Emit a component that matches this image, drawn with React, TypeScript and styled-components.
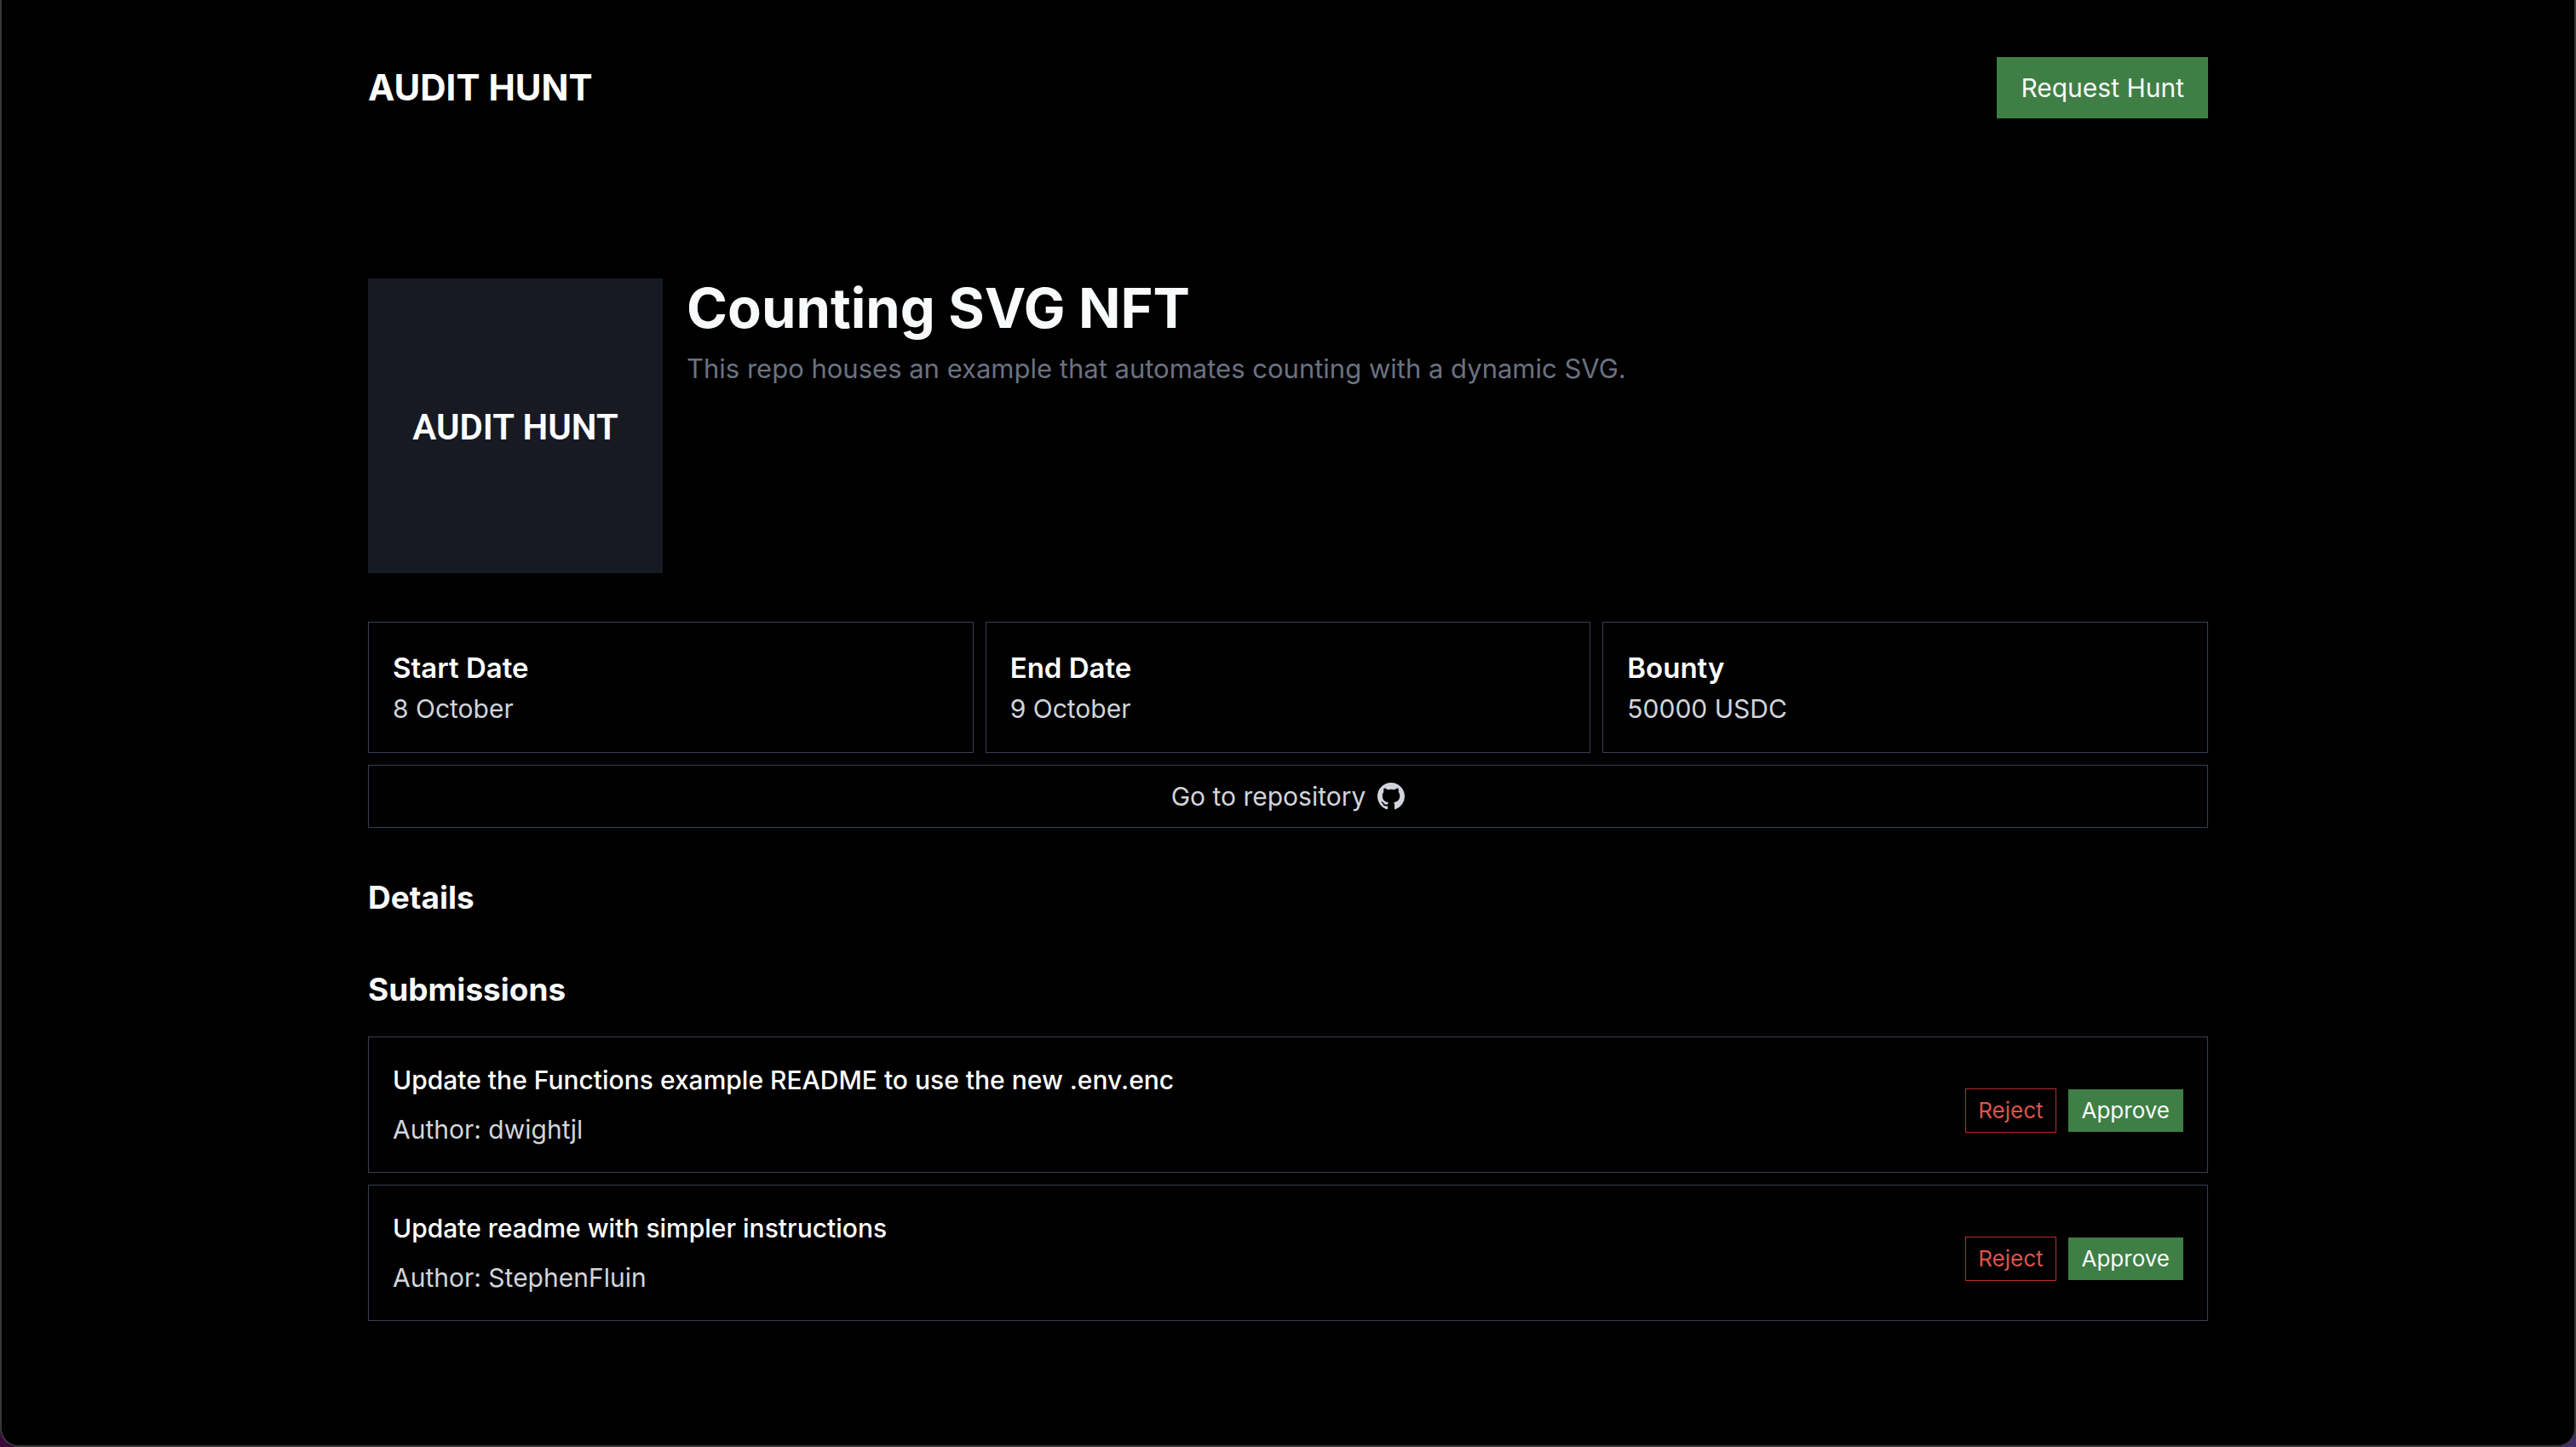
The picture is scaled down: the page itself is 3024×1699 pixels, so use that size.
import React from "react";
import styled, { createGlobalStyle } from "styled-components";

const GlobalStyle = createGlobalStyle`
  * { box-sizing: border-box; }
  body {
    margin: 0;
    background: linear-gradient(to right, #3b0a38, #43306a);
    font-family: Inter, "Noto Sans", sans-serif;
    font-size: 30px;
    line-height: 44px;
    color: #f9fafb;
  }
  h1, h2, h3, p, dl, dt, dd, ul { margin: 0; padding: 0; }
`;

const Page = styled.div`
  min-height: 100vh;
  background: #000;
  border: 2px solid #383838;
  border-top: 0;
  border-radius: 0 0 22px 22px;
`;

const Container = styled.div`
  max-width: 2160px;
  margin: 0 auto;
`;

const Header = styled.header`
  display: flex;
  align-items: center;
  justify-content: space-between;
  padding: 67px 0 0;
`;

const Brand = styled.a`
  color: #fff;
  font-size: 42px;
  font-weight: 700;
  line-height: 56px;
  text-decoration: none;
`;

const Button = styled.button`
  border: 0;
  background: #3f7f45;
  color: #f9fafb;
  font: inherit;
  padding: 14px 28px;
  cursor: pointer;
`;

const SmallButton = styled(Button)`
  font-size: 26px;
  line-height: 36px;
  padding: 7px 16px;
`;

const RejectButton = styled(SmallButton)`
  border: 1px solid #b92c26;
  background: transparent;
  color: #de524c;
  padding: 7px 14px;
`;

const Main = styled.main`
  padding: 188px 0 56px;
`;

const Hero = styled.section`
  display: flex;
  gap: 28px;
  margin-bottom: 57px;
`;

const Cover = styled.div`
  display: flex;
  flex: none;
  align-items: center;
  justify-content: center;
  width: 346px;
  aspect-ratio: 1;
  padding-top: 4px;
  background: #171a23;
  color: #fff;
  font-family: Roboto, "Noto Sans", sans-serif;
  font-size: 42px;
  font-weight: 600;
`;

const Title = styled.h1`
  margin-bottom: 14px;
  font-size: 65px;
  font-weight: 700;
  line-height: 70px;
`;

const Description = styled.p`
  color: #6b7280;
  font-size: 31px;
`;

const Facts = styled.dl`
  display: grid;
  grid-template-columns: repeat(3, 1fr);
  gap: 14px;
  margin-bottom: 14px;
`;

const Fact = styled.div`
  border: 1px solid #374151;
  padding: 28px;
`;

const FactName = styled.dt`
  color: #fff;
  font-size: 33px;
  font-weight: 600;
  line-height: 50px;
`;

const FactValue = styled.dd`
  color: #d1d5db;
  line-height: 46px;
`;

const RepoLink = styled.a`
  display: flex;
  align-items: center;
  justify-content: center;
  gap: 14px;
  border: 1px solid #374151;
  padding: 14px;
  color: #d1d5db;
  text-decoration: none;
`;

const SectionTitle = styled.h2`
  margin-top: 56px;
  font-size: 37px;
  font-weight: 700;
  line-height: 52px;
`;

const SubmissionList = styled.ul`
  display: grid;
  gap: 14px;
  margin-top: 29px;
  list-style: none;
`;

const SubmissionCard = styled.li`
  display: flex;
  align-items: center;
  justify-content: space-between;
  border: 1px solid #374151;
  padding: 28px;
`;

const SubmissionTitle = styled.h3`
  margin-bottom: 14px;
  color: #fff;
  font-size: 30px;
  font-weight: 500;
`;

const Author = styled.p`
  color: #d1d5db;
`;

const Actions = styled.div`
  display: flex;
  align-items: center;
  gap: 14px;
  margin-top: 14px;
`;

const facts = [
  { name: "Start Date", value: "8 October" },
  { name: "End Date", value: "9 October" },
  { name: "Bounty", value: "50000 USDC" },
];

const submissions = [
  { title: "Update the Functions example README to use the new .env.enc", author: "dwightjl" },
  { title: "Update readme with simpler instructions", author: "StephenFluin" },
];

const GithubMark = () => (
  <svg width="32" height="32" viewBox="0 0 16 16" fill="currentColor" aria-hidden="true">
    <path d="M8 0C3.58 0 0 3.58 0 8c0 3.54 2.29 6.53 5.47 7.59.4.07.55-.17.55-.38 0-.19-.01-.82-.01-1.49-2.01.37-2.53-.49-2.69-.94-.09-.23-.48-.94-.82-1.13-.28-.15-.68-.52-.01-.53.63-.01 1.08.58 1.23.82.72 1.21 1.87.87 2.33.66.07-.52.28-.87.51-1.07-1.78-.2-3.64-.89-3.64-3.95 0-.87.31-1.59.82-2.15-.08-.2-.36-1.02.08-2.12 0 0 .67-.21 2.2.82.64-.18 1.32-.27 2-.27s1.36.09 2 .27c1.53-1.04 2.2-.82 2.2-.82.44 1.1.16 1.92.08 2.12.51.56.82 1.27.82 2.15 0 3.07-1.87 3.75-3.65 3.95.29.25.54.73.54 1.48 0 1.07-.01 1.93-.01 2.2 0 .21.15.46.55.38A8.01 8.01 0 0 0 16 8c0-4.42-3.58-8-8-8z" />
  </svg>
);

export default function App() {
  return (
    <>
      <GlobalStyle />
      <Page>
        <Container>
          <Header>
            <Brand href="#">AUDIT HUNT</Brand>
            <Button type="button">Request Hunt</Button>
          </Header>
          <Main>
            <Hero>
              <Cover>AUDIT HUNT</Cover>
              <div>
                <Title>Counting SVG NFT</Title>
                <Description>
                  This repo houses an example that automates counting with a dynamic SVG.
                </Description>
              </div>
            </Hero>
            <Facts>
              {facts.map((fact) => (
                <Fact key={fact.name}>
                  <FactName>{fact.name}</FactName>
                  <FactValue>{fact.value}</FactValue>
                </Fact>
              ))}
            </Facts>
            <RepoLink href="#">
              Go to repository
              <GithubMark />
            </RepoLink>
            <SectionTitle>Details</SectionTitle>
            <SectionTitle>Submissions</SectionTitle>
            <SubmissionList>
              {submissions.map((submission) => (
                <SubmissionCard key={submission.title}>
                  <div>
                    <SubmissionTitle>{submission.title}</SubmissionTitle>
                    <Author>Author: {submission.author}</Author>
                  </div>
                  <Actions>
                    <RejectButton type="button">Reject</RejectButton>
                    <SmallButton type="button">Approve</SmallButton>
                  </Actions>
                </SubmissionCard>
              ))}
            </SubmissionList>
          </Main>
        </Container>
      </Page>
    </>
  );
}
